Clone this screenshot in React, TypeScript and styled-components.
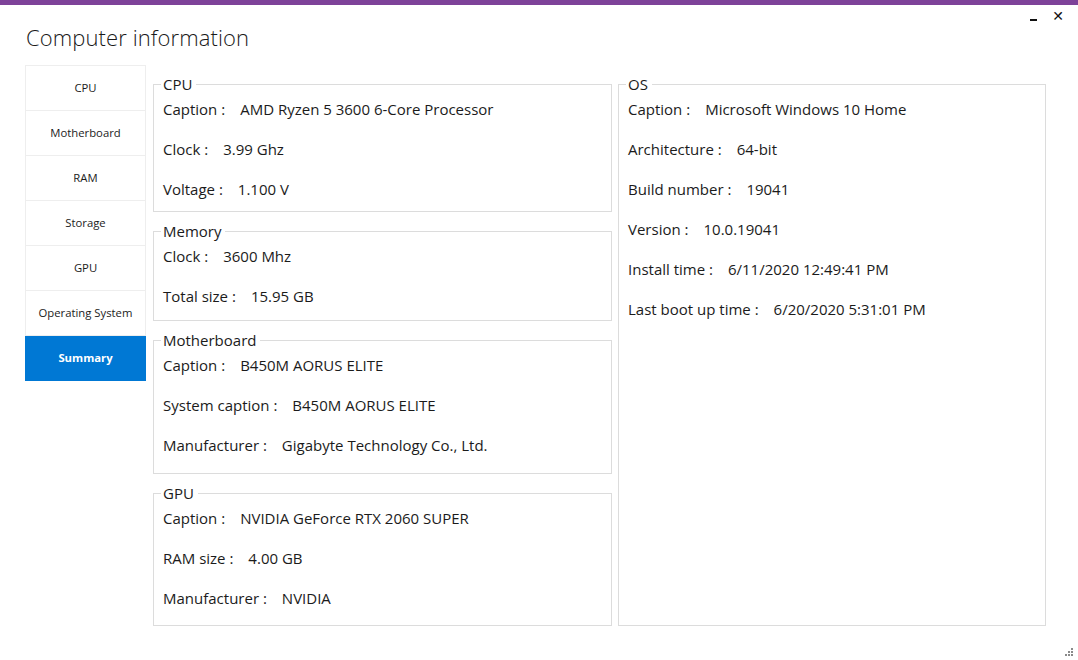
import { createGlobalStyle, styled } from "styled-components";

const GlobalStyle = createGlobalStyle`
  html, body {
    margin: 0;
    padding: 0;
    background: #ffffff;
  }
  body {
    font-family: "Open Sans", "Noto Sans", "Liberation Sans", sans-serif;
    color: #1b1b1b;
  }
`;

type Field = [string, string];

const groups: { title: string; tail: number; rows: Field[] }[] = [
  {
    title: "CPU",
    tail: 12,
    rows: [
      ["Caption :", "AMD Ryzen 5 3600 6-Core Processor"],
      ["Clock :", "3.99 Ghz"],
      ["Voltage :", "1.100 V"],
    ],
  },
  {
    title: "Memory",
    tail: 14,
    rows: [
      ["Clock :", "3600 Mhz"],
      ["Total size :", "15.95 GB"],
    ],
  },
  {
    title: "Motherboard",
    tail: 18,
    rows: [
      ["Caption :", "B450M AORUS ELITE"],
      ["System caption :", "B450M AORUS ELITE"],
      ["Manufacturer :", "Gigabyte Technology Co., Ltd."],
    ],
  },
  {
    title: "GPU",
    tail: 17,
    rows: [
      ["Caption :", "NVIDIA GeForce RTX 2060 SUPER"],
      ["RAM size :", "4.00 GB"],
      ["Manufacturer :", "NVIDIA"],
    ],
  },
];

const osRows: Field[] = [
  ["Caption :", "Microsoft Windows 10 Home"],
  ["Architecture :", "64-bit"],
  ["Build number :", "19041"],
  ["Version :", "10.0.19041"],
  ["Install time :", "6/11/2020 12:49:41 PM"],
  ["Last boot up time :", "6/20/2020 5:31:01 PM"],
];

const tabs = ["CPU", "Motherboard", "RAM", "Storage", "GPU", "Operating System", "Summary"];

const Rows = ({ rows }: { rows: Field[] }) => (
  <>
    {rows.map(([label, value]) => (
      <Row key={label}>
        <Label>{label}</Label>
        <Value>{value}</Value>
      </Row>
    ))}
  </>
);

const App = () => {
  return (
    <Window>
      <GlobalStyle />
      <Header>
        <Title>Computer information</Title>
        <Controls>
          <Minimize />
          <Close>✕</Close>
        </Controls>
      </Header>
      <Body>
        <Sidebar>
          {tabs.map((t) => (
            <Tab key={t} $active={t === "Summary"}>
              {t}
            </Tab>
          ))}
        </Sidebar>
        <LeftColumn>
          {groups.map((g) => (
            <Group key={g.title} $tail={g.tail}>
              <Legend>{g.title}</Legend>
              <Rows rows={g.rows} />
            </Group>
          ))}
        </LeftColumn>
        <OsGroup $tail={0}>
          <Legend>OS</Legend>
          <Rows rows={osRows} />
        </OsGroup>
      </Body>
      <Grip viewBox="0 0 10 10">
        <rect x="8" y="2" width="2" height="2" />
        <rect x="5" y="5" width="2" height="2" />
        <rect x="8" y="5" width="2" height="2" />
        <rect x="2" y="8" width="2" height="2" />
        <rect x="5" y="8" width="2" height="2" />
        <rect x="8" y="8" width="2" height="2" />
      </Grip>
    </Window>
  );
};

export default App;

const Window = styled.div`
  position: relative;
  width: 1078px;
  height: 660px;
  box-sizing: border-box;
  border-top: 5px solid #7e4299;
  overflow: hidden;
`;

const Header = styled.div`
  display: flex;
  align-items: flex-start;
  height: 60px;
  padding-left: 26px;
`;

const Title = styled.h1`
  margin: 19px 0 0;
  font-size: 22px;
  line-height: 26px;
  font-weight: 300;
  color: #1a1a1a;
  letter-spacing: 0.1px;
`;

const Controls = styled.div`
  margin-left: auto;
  display: flex;
  align-items: center;
  gap: 15px;
  padding: 3px 14px 0 0;
`;

const Minimize = styled.span`
  display: block;
  width: 7px;
  height: 2px;
  margin-top: 8px;
  background: #111;
`;

const Close = styled.span`
  font-family: "DejaVu Sans", sans-serif;
  font-size: 14px;
  line-height: 16px;
  color: #111;
`;

const Body = styled.div`
  display: flex;
  align-items: flex-start;
  gap: 7px;
  padding-left: 25px;
`;

const Sidebar = styled.div`
  width: 121px;
  display: flex;
  flex-direction: column;
  border: 1px solid #eeeeee;
  border-bottom: none;
  box-sizing: border-box;
`;

const Tab = styled.div<{ $active?: boolean }>`
  height: 45px;
  display: flex;
  align-items: center;
  justify-content: center;
  padding-bottom: 1px;
  font-size: 11.3px;
  font-weight: ${(p) => (p.$active ? 700 : 400)};
  color: ${(p) => (p.$active ? "#ffffff" : "#1b1b1b")};
  background: ${(p) => (p.$active ? "#0078d4" : "#ffffff")};
  border-bottom: 1px solid ${(p) => (p.$active ? "#0078d4" : "#eeeeee")};
  margin: ${(p) => (p.$active ? "0 -1px" : "0")};
  box-sizing: border-box;
`;

const LeftColumn = styled.div`
  width: 459px;
  display: flex;
  flex-direction: column;
  gap: 9px;
  margin-top: 9px;
`;

const Group = styled.fieldset<{ $tail: number }>`
  margin: 0;
  padding: 5px 0 ${(p) => p.$tail}px 9px;
  border: 1px solid #dcdcdc;
  display: flex;
  flex-direction: column;
  gap: 20px;
  min-width: 0;
`;

const OsGroup = styled(Group)`
  width: 428px;
  height: 552px;
  box-sizing: border-box;
  margin: 9px 0 0 -1px;
`;

const Legend = styled.legend`
  margin-left: -2px;
  padding: 0 4px 0 2px;
  font-size: 15px;
  line-height: 20px;
  color: #1b1b1b;
`;

const Row = styled.div`
  display: flex;
  align-items: center;
  height: 20px;
  font-size: 15px;
`;

const Label = styled.span`
  margin-right: 15px;
`;

const Value = styled.span``;

const Grip = styled.svg`
  position: absolute;
  right: 5px;
  bottom: 4px;
  width: 10px;
  height: 10px;
  fill: #8a8a8a;
`;
